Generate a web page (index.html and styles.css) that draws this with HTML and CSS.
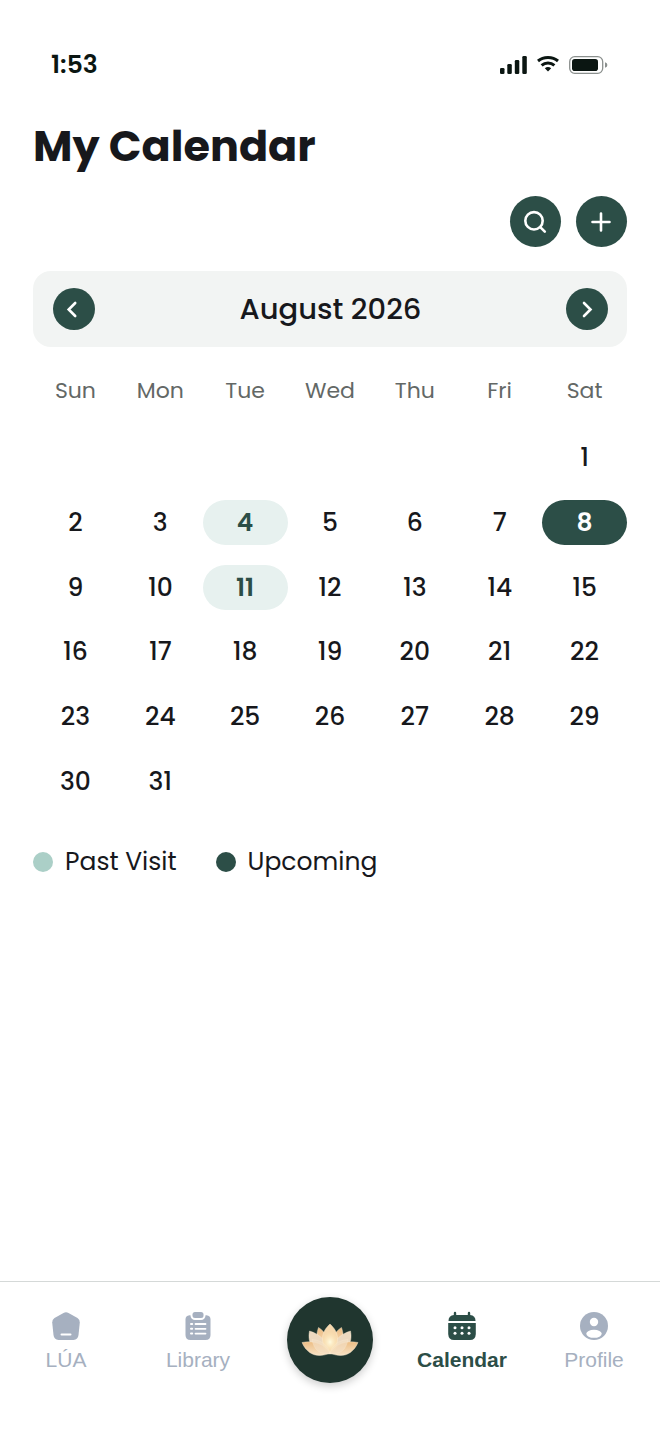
FILE: index.html
```
<!DOCTYPE html>
<html lang="en">
<head>
    <meta charset="UTF-8">
    <meta name="viewport" content="width=device-width, initial-scale=1.0">
    <title>My Calendar</title>
    <link rel="stylesheet" href="styles.css">
</head>
<body>
    <div class="status-bar">
        <span class="status-time">1:53</span>
        <div class="status-icons">
            <svg width="28" height="18" viewBox="0 0 28 18" fill="#0b1612">
                <rect x="1" y="12" width="4.500" height="6" rx="1.300"/>
                <rect x="8.300" y="8" width="4.500" height="10" rx="1.300"/>
                <rect x="15.800" y="4" width="4.500" height="14" rx="1.300"/>
                <rect x="23.300" y="0" width="4.500" height="18" rx="1.300"/>
            </svg>
            <svg width="22" height="18" viewBox="0 0 22 18" fill="none" stroke="#0b1612" stroke-width="3">
                <path d="M1 5C6.500 0.300 15.500 0.300 21 5"/>
                <path d="M4.600 9.300C8.300 6.100 13.700 6.100 17.400 9.300"/>
                <path d="M7.800 12.300Q11 9.900 14.200 12.300L11 15.600Z" fill="#0b1612" stroke="none"/>
            </svg>
            <svg width="39" height="18" viewBox="0 0 39 18">
                <rect x="0.700" y="0.700" width="33" height="16.600" rx="5" fill="none" stroke="#8b908e" stroke-width="1.300"/>
                <rect x="3" y="3" width="26" height="12" rx="2.800" fill="#0b1612"/>
                <path d="M36 6.300Q38.400 7 38.400 9T36 11.700Z" fill="#8b908e"/>
            </svg>
        </div>
    </div>

    <main class="content">
        <h1>My Calendar</h1>

        <div class="actions">
            <button class="round-button" type="button" aria-label="Search">
                <svg width="26" height="26" viewBox="0 0 26 26">
                    <circle cx="11" cy="11.800" r="8.700"/>
                    <path d="M17.500 18.300L21.800 22.600"/>
                </svg>
            </button>
            <button class="round-button" type="button" aria-label="Add visit">
                <svg width="26" height="26" viewBox="0 0 26 26">
                    <path d="M12 4.500V21.500M3.500 13H20.500"/>
                </svg>
            </button>
        </div>

        <div class="month-bar">
            <button class="round-button small" type="button" aria-label="Previous month">
                <svg width="20" height="20" viewBox="0 0 20 20"><path d="M11.200 4L4.700 10.500L11.200 17"/></svg>
            </button>
            <h2>August 2026</h2>
            <button class="round-button small" type="button" aria-label="Next month">
                <svg width="20" height="20" viewBox="0 0 20 20"><path d="M7 4L13.500 10.500L7 17"/></svg>
            </button>
        </div>

        <table class="calendar">
            <thead>
                <tr><th>Sun</th><th>Mon</th><th>Tue</th><th>Wed</th><th>Thu</th><th>Fri</th><th>Sat</th></tr>
            </thead>
            <tbody>
                <tr>
                    <td></td><td></td><td></td><td></td><td></td><td></td>
                    <td><button class="day">1</button></td>
                </tr>
                <tr>
                    <td><button class="day">2</button></td>
                    <td><button class="day">3</button></td>
                    <td><button class="day visit">4</button></td>
                    <td><button class="day">5</button></td>
                    <td><button class="day">6</button></td>
                    <td><button class="day">7</button></td>
                    <td><button class="day selected">8</button></td>
                </tr>
                <tr>
                    <td><button class="day">9</button></td>
                    <td><button class="day">10</button></td>
                    <td><button class="day visit">11</button></td>
                    <td><button class="day">12</button></td>
                    <td><button class="day">13</button></td>
                    <td><button class="day">14</button></td>
                    <td><button class="day">15</button></td>
                </tr>
                <tr>
                    <td><button class="day">16</button></td>
                    <td><button class="day">17</button></td>
                    <td><button class="day">18</button></td>
                    <td><button class="day">19</button></td>
                    <td><button class="day">20</button></td>
                    <td><button class="day">21</button></td>
                    <td><button class="day">22</button></td>
                </tr>
                <tr>
                    <td><button class="day">23</button></td>
                    <td><button class="day">24</button></td>
                    <td><button class="day">25</button></td>
                    <td><button class="day">26</button></td>
                    <td><button class="day">27</button></td>
                    <td><button class="day">28</button></td>
                    <td><button class="day">29</button></td>
                </tr>
                <tr>
                    <td><button class="day">30</button></td>
                    <td><button class="day">31</button></td>
                    <td></td><td></td><td></td><td></td><td></td>
                </tr>
            </tbody>
        </table>

        <div class="legend">
            <span class="legend-item"><i class="dot past"></i>Past Visit</span>
            <span class="legend-item"><i class="dot upcoming"></i>Upcoming</span>
        </div>
    </main>

    <nav class="tab-bar">
        <a class="tab" href="#lua">
            <svg width="28" height="28" viewBox="0 0 28 28">
                <path d="M11.500 0.900Q14 -0.500 16.500 0.900L25.500 6Q28 7.600 27.800 10.500L26.500 23Q26 27.700 21.500 28H6.500Q2 27.700 1.500 23L0.200 10.500Q0 7.600 2.500 6Z" fill="currentColor"/>
                <path d="M9.500 22.500H18.500" stroke="#fff" stroke-width="2" stroke-linecap="round"/>
            </svg>
            <span>LÚA</span>
        </a>
        <a class="tab" href="#library">
            <svg width="28" height="28" viewBox="0 0 28 28">
                <path d="M5.500 3.200H22.500Q26.500 3.500 26.500 7.500V23Q26.500 28 21.500 28H6.500Q1.500 28 1.500 23V7.500Q1.500 3.500 5.500 3.200Z" fill="currentColor"/>
                <rect x="8.500" y="0" width="11" height="6" rx="2.500" fill="currentColor" stroke="#fff" stroke-width="4" paint-order="stroke"/>
                <path d="M11.500 12H21.500M11.500 16.800H21.500M11.500 21.600H21.500" stroke="#fff" stroke-width="1.800" stroke-linecap="round"/>
                <path d="M7 12H8.200M7 16.800H8.200M7 21.600H8.200" stroke="#fff" stroke-width="2" stroke-linecap="round"/>
            </svg>
            <span>Library</span>
        </a>
        <a class="tab-main" href="#home" aria-label="Home">
            <svg width="56" height="32" viewBox="0 0 56 32">
                <defs>
                    <linearGradient id="petal" x1="0" y1="0" x2="0" y2="1">
                        <stop offset="0" stop-color="#ecbd84"/>
                        <stop offset="1" stop-color="#f8e3c6"/>
                    </linearGradient>
                    <radialGradient id="glow">
                        <stop offset="0" stop-color="#fffbe0"/>
                        <stop offset="1" stop-color="#ffe5b0" stop-opacity="0"/>
                    </radialGradient>
                </defs>
                <g fill="url(#petal)" stroke="#fff0d8" stroke-width="0.400">
                    <path d="M16.500 3.500C24 8 28 17 28 29C14 24 13 14 16.500 3.500Z"/>
                    <path d="M39.500 3.500C32 8 28 17 28 29C42 24 43 14 39.500 3.500Z"/>
                    <path d="M7.500 7C18 10 26 18 28 30C11 30 5 19 7.500 7Z" fill="#ecd9c0"/>
                    <path d="M48.500 7C38 10 30 18 28 30C45 30 51 19 48.500 7Z" fill="#ecd9c0"/>
                    <path d="M28 0C37 8 39 19 28 30C17 19 19 8 28 0Z" fill="#f6d8ad"/>
                    <path d="M0 18.500C12 16 23 20 28 29C17 34 6 32 0 18.500Z"/>
                    <path d="M56 18.500C44 16 33 20 28 29C39 34 50 32 56 18.500Z"/>
                    <path d="M10 15.500C19 16 26 21 28 29C19 31 12 27 10 15.500Z" fill="#f4dfc4" opacity="0.700"/>
                    <path d="M46 15.500C37 16 30 21 28 29C37 31 44 27 46 15.500Z" fill="#f4dfc4" opacity="0.700"/>
                </g>
                <ellipse cx="28" cy="18" rx="9" ry="11" fill="url(#glow)"/>
            </svg>
        </a>
        <a class="tab active" href="#calendar">
            <svg width="28" height="28" viewBox="0 0 28 28">
                <path d="M7 1V6M21 1V6" stroke="currentColor" stroke-width="2.400" stroke-linecap="round"/>
                <path d="M0.500 9Q0.500 3.500 6 3H22Q27.500 3.500 27.500 9Z" fill="currentColor"/>
                <path d="M0.200 11H27.800V22Q27.500 28 22 28H6Q0.500 28 0.200 22Z" fill="currentColor"/>
                <g fill="#fff">
                    <circle cx="7" cy="15.800" r="1.500"/><circle cx="14" cy="15.800" r="1.500"/><circle cx="21" cy="15.800" r="1.500"/>
                    <circle cx="7" cy="21.300" r="1.500"/><circle cx="14" cy="21.300" r="1.500"/><circle cx="21" cy="21.300" r="1.500"/>
                </g>
            </svg>
            <span>Calendar</span>
        </a>
        <a class="tab" href="#profile">
            <svg width="28" height="28" viewBox="0 0 28 28">
                <circle cx="14" cy="14" r="14" fill="currentColor"/>
                <circle cx="14" cy="10" r="4.200" fill="#fff"/>
                <ellipse cx="14" cy="21.800" rx="7.700" ry="4" fill="#fff"/>
            </svg>
            <span>Profile</span>
        </a>
    </nav>
</body>
</html>
```

FILE: styles.css
```
* {
    box-sizing: border-box;
}

body {
    background: #ffffff;
    color: #17181c;
    font-family: Poppins, Inter, sans-serif;
    margin: 0;
    display: flex;
    flex-direction: column;
    min-height: 100vh;
}

button {
    border: none;
    padding: 0;
    font-family: inherit;
    cursor: pointer;
}

svg {
    display: block;
    overflow: visible;
}

/* Status bar */
.status-bar {
    display: flex;
    justify-content: space-between;
    align-items: center;
    padding: 50px 52px 0 51px;
    height: 80px;
}

.status-time {
    color: #0b1612;
    font-size: 25px;
    font-weight: 600;
}

.status-icons {
    display: flex;
    gap: 10px;
}

.content {
    padding: 36px 33px 40px;
}

h1 {
    font-size: 43px;
    font-weight: 700;
    line-height: 60px;
    margin: 0;
}

.actions {
    display: flex;
    justify-content: flex-end;
    gap: 15px;
    margin: 20px 0 24px;
}

.round-button {
    display: flex;
    justify-content: center;
    align-items: center;
    width: 51px;
    height: 51px;
    background: #2c4e47;
    border-radius: 50%;
}

.round-button svg {
    fill: none;
    stroke: #ffffff;
    stroke-width: 2.6;
    stroke-linecap: round;
}

.round-button.small {
    width: 42px;
    height: 42px;
}

.month-bar {
    display: flex;
    justify-content: space-between;
    align-items: center;
    height: 76px;
    padding: 0 19px 0 20px;
    background: #f2f4f3;
    border-radius: 18px;
}

h2 {
    font-size: 29px;
    font-weight: 500;
    margin: 0;
}

/* Month grid */
.calendar {
    width: 100%;
    height: 459px;
    margin-top: 8px;
    table-layout: fixed;
    border-collapse: collapse;
}

.calendar th {
    height: 71px;
    padding: 0;
    color: #636866;
    font-size: 22px;
    font-weight: 400;
}

.calendar td {
    padding: 0;
}

.day {
    display: block;
    width: 100%;
    height: 45px;
    background: none;
    color: #17181c;
    border-radius: 23px;
    font-size: 25px;
    font-weight: 500;
}

.day.visit {
    background: #e7f1ef;
    color: #2c4e47;
    font-weight: 600;
}

.day.selected {
    background: #2c4e47;
    color: #ffffff;
    font-weight: 600;
}

.legend {
    display: flex;
    gap: 39px;
    margin-top: 32px;
    font-size: 25px;
    line-height: 32px;
}

.legend-item {
    display: flex;
    align-items: center;
    gap: 12px;
}

.dot {
    width: 20px;
    height: 20px;
    border-radius: 50%;
}

.dot.past {
    background: #abcfc7;
}

.dot.upcoming {
    background: #2c4e47;
}

/* Bottom navigation */
.tab-bar {
    display: grid;
    grid-template-columns: repeat(5, 1fr);
    justify-items: center;
    align-items: start;
    margin-top: auto;
    padding: 15px 0 51px;
    border-top: 1px solid #d5d9d8;
    font-family: "Liberation Sans", Arial, sans-serif;
}

.tab {
    display: flex;
    flex-direction: column;
    align-items: center;
    gap: 8px;
    padding-top: 15px;
    color: #a6b0c0;
    font-size: 21px;
    line-height: 24px;
    text-decoration: none;
}

.tab.active {
    color: #2c4e47;
    font-weight: 700;
}

.tab-main {
    display: flex;
    justify-content: center;
    align-items: center;
    width: 86px;
    height: 86px;
    background: #20362f;
    border-radius: 50%;
    box-shadow: 0 3px 8px rgba(0, 0, 0, 0.2);
}
```
